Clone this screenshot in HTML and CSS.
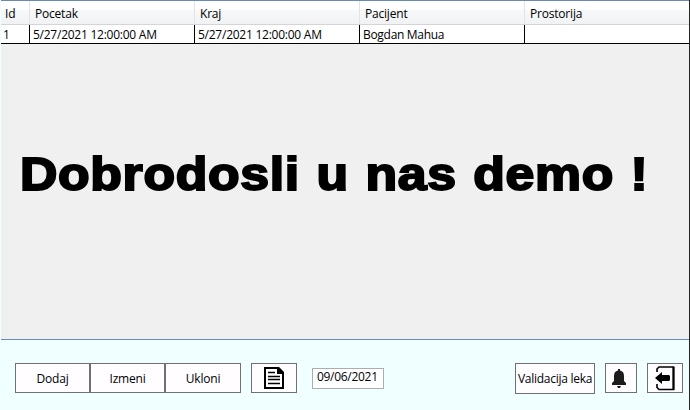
FILE: index.html
```html
<!DOCTYPE html>
<html lang="sr">
<head>
<meta charset="utf-8">
<title>Termini</title>
<link rel="stylesheet" href="styles.css">
</head>
<body>
<div class="window">
  <main class="grid">
    <div class="row head">
      <div class="cell">Id</div><div class="cell">Pocetak</div><div class="cell">Kraj</div><div class="cell">Pacijent</div><div class="cell">Prostorija</div>
    </div>
    <div class="row data">
      <div class="cell">1</div><div class="cell date">5/27/2021 12:00:00 AM</div><div class="cell date">5/27/2021 12:00:00 AM</div><div class="cell name">Bogdan Mahua</div><div class="cell"></div>
    </div>
    <h1 class="welcome">Dobrodosli u nas demo !</h1>
  </main>
  <footer class="toolbar">
    <div class="group">
      <button class="btn">Dodaj</button><button class="btn">Izmeni</button><button class="btn last">Ukloni</button>
    </div>
    <button class="btn doc" aria-label="Izvestaj">
      <svg width="20" height="22" viewBox="0 0 20 22"><path d="M1 1H14L19 6V21H1Z" fill="#fff" stroke="#000" stroke-width="2"/><path d="M13 0H15L20 5V7H13Z"/><path d="M4 5.5H11M4 9.5H16M4 12.5H16M4 16.5H16" stroke="#000" stroke-width="1.3"/></svg>
    </button>
    <div class="datebox">09/06/2021</div>
    <button class="btn validate">Validacija leka</button>
    <button class="btn bell" aria-label="Obavestenja">
      <svg width="14" height="19" viewBox="0 0 14 19" fill="#1c1c1c"><path d="M6 0H8V1.5C10.8 2 12 4 12 7V12L14 14V16H0V14L2 12V7C2 4 3.200 2 6 1.500Z"/><path d="M5 17H9L8 19H6Z"/></svg>
    </button>
    <button class="btn exit" aria-label="Izlaz">
      <svg width="20" height="25" viewBox="0 0 20 25"><path d="M2 6V3L4 1H18.500V23.500H4L2 21.500V18" fill="none" stroke="#000" stroke-width="1.600"/><path d="M18.500 1V24" stroke="#000" stroke-width="2"/><path d="M0 12L7 6V9H14L15 10V14L14 15H7V18Z"/></svg>
    </button>
  </footer>
</div>
</body>
</html>
```
FILE: styles.css
```css
* { box-sizing: border-box; }
body { margin: 0; background: #f0ffff; font: 12px/16px "Open Sans", "Noto Sans", sans-serif; color: #000; overflow: hidden; }
.window { width: 690px; height: 410px; padding-left: 1px; border-right: 1px solid #252525; background: #f0ffff; }
.grid { height: 340px; background: #f0f0f0; border-top: 1px solid #688caf; border-bottom: 1px solid #688caf; }
.row { display: grid; grid-template-columns: 29px 165px 165px 165px 1fr; background: #fff; }
.cell { white-space: nowrap; letter-spacing: -0.2px; }
.head { height: 24px; background: linear-gradient(#fff 0%, #fff 40%, #f7f8fa 41%, #f1f2f4 100%); border-bottom: 1px solid #d5d5d5; }
.head .cell { padding: 5px 0 0 5px; border-right: 1px solid #e2e3e5; }
.head .cell:first-child { padding-left: 4px; }
.head .cell:last-child { border-right: 0; }
.data { height: 19px; border-bottom: 1px solid #000; }
.data .cell { padding: 2px 0 0 3px; border-right: 1px solid #000; }
.data .cell:first-child { padding-left: 2px; }
.data .cell:last-child { border-right: 0; }
.data .date { letter-spacing: -0.25px; }
.data .name { letter-spacing: -0.3px; }
.welcome { width: 580px; margin: 101px 0 0 19px; font: 700 46px/58px "Liberation Sans", Arial, sans-serif; letter-spacing: 0.6px; word-spacing: 1.4px; white-space: nowrap; -webkit-text-stroke: 2px #000; transform: scaleX(1.125); transform-origin: left; }
.toolbar { display: flex; align-items: flex-start; padding: 23px 6px 0 14px; }
.group { display: flex; }
.btn { display: flex; align-items: center; justify-content: center; width: 75px; height: 30px; margin: 0; padding: 1px 0 0; border: 1px solid #707070; border-radius: 0; background: #fffdff; font: inherit; color: #000; letter-spacing: -0.2px; white-space: nowrap; }
.btn svg { display: block; flex: none; }
.btn.last { width: 76px; }
.btn.doc { width: 46px; margin-left: 10px; padding: 0; }
.datebox { width: 72px; height: 21px; margin: 5px 0 0 15px; padding: 0 0 0 4px; border: 1px solid #abadb3; background: #fff; letter-spacing: -0.3px; white-space: nowrap; }
.btn.validate { width: 80px; height: 31px; margin-left: auto; padding: 0; letter-spacing: -0.27px; }
.btn.bell { width: 32px; margin-left: 10px; padding: 0 4px 0 0; }
.btn.exit { width: 36px; margin-left: 10px; padding: 0; }
```
